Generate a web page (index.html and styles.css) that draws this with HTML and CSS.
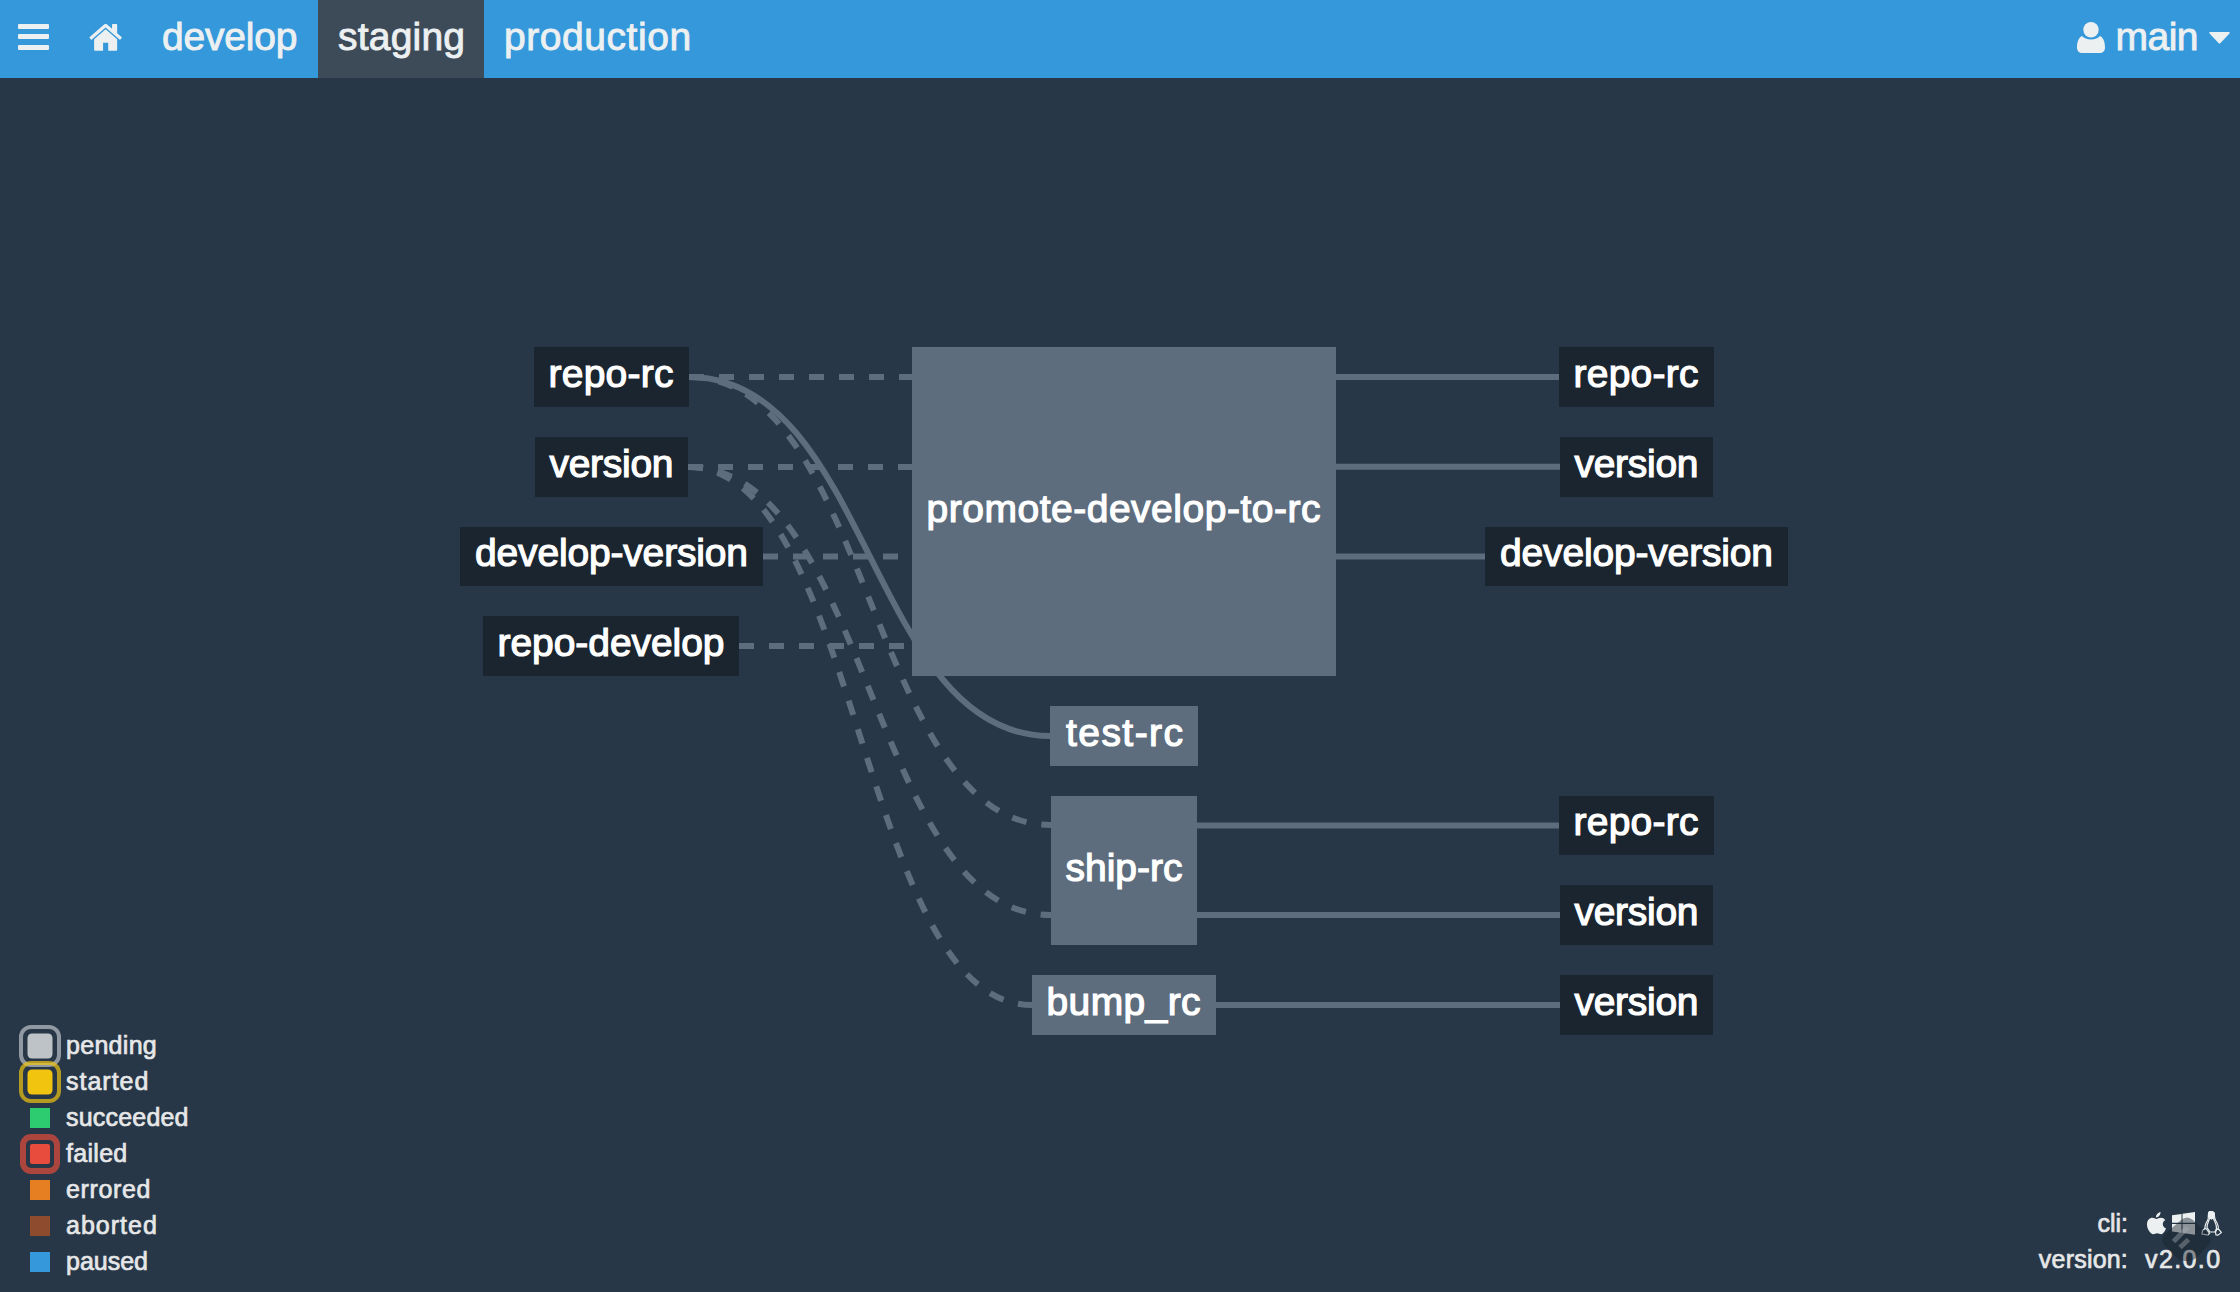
FILE: index.html
```html
<!DOCTYPE html>
<html lang="en">
<head>
<meta charset="utf-8">
<title>staging</title>
<link rel="stylesheet" href="styles.css">
</head>
<body>
<header class="topbar">
  <nav class="nav">
    <a class="icon-link menu"><svg width="32" height="28" viewBox="0 0 32 28"><path d="M1 0H30a1 1 0 0 1 1 1V4a1 1 0 0 1-1 1H1a1 1 0 0 1-1-1V1a1 1 0 0 1 1-1zM1 10H30a1 1 0 0 1 1 1V14a1 1 0 0 1-1 1H1a1 1 0 0 1-1-1V11a1 1 0 0 1 1-1zM1 21H30a1 1 0 0 1 1 1V25a1 1 0 0 1-1 1H1a1 1 0 0 1-1-1V22a1 1 0 0 1 1-1z"/></svg></a>
    <a class="icon-link home"><svg width="33" height="27" viewBox="0 0 1650 1290" preserveAspectRatio="none"><path d="M1408 736v480q0 26-19 45t-45 19H960V896H704v384H320q-26 0-45-19t-19-45V736q0-1 .5-3t.5-3l575-474 575 474q1 2 1 6zm223-69-62 74q-8 9-21 11h-3q-13 0-21-7L832 168 140 745q-12 8-24 7-13-2-21-11l-62-74q-8-10-7-23.500T37 622L756 23q32-26 76-26t76 26l244 204V32q0-14 9-23t23-9h192q14 0 23 9t9 23v408l219 182q10 8 11 21.500T1631 667z"/></svg></a>
    <a class="tab develop">develop</a>
    <a class="tab staging active">staging</a>
    <a class="tab production">production</a>
  </nav>
  <div class="user">
    <svg width="29" height="32" viewBox="0 0 29 32"><path d="M5 14C1.500 16 0 20 0 25.500 0 29 2 31 5.500 31h17c3.500 0 5.500-2 5.500-5.500C28 20 26.500 16 23 14c-2 2-5 3.500-9 3.500S7 16 5 14z"/><circle cx="14" cy="7.700" r="7.700"/></svg>
    <span>main</span>
    <svg class="caret" width="21" height="12" viewBox="0 0 21 12"><path d="M1 0H20Q21.500.5 20 2L11.500 11Q10.500 12 9.500 11L1 2Q-.5.5 1 0z"/></svg>
  </div>
</header>
<main class="pipeline">
  <svg class="graph" width="2240" height="1214" viewBox="0 78 2240 1214">
    <g class="edges">
      <path class="dashed" d="M689 377H912"/>
      <path class="dashed" d="M689 377C870 377 870 825 1051 825"/>
      <path d="M689 377C870 377 870 736 1050 736"/>
      <path class="dashed" d="M688 467H912"/>
      <path class="dashed" d="M688 467C870 467 870 915 1051 915"/>
      <path class="dashed" d="M688 467C860 467 860 1005 1032 1005"/>
      <path class="dashed" d="M763 556.500H912"/>
      <path class="dashed" d="M739 646H912"/>
      <path d="M1336 377H1559M1336 466.700H1560M1336 556.500H1485M1197 825.400H1559M1197 915H1560M1216 1005H1560"/>
    </g>
    <g class="resource">
      <rect x="534" y="347" width="155" height="60"/><text x="548.500" y="387" textLength="125">repo-rc</text>
      <rect x="535" y="437" width="153" height="60"/><text x="549.500" y="477" textLength="124">version</text>
      <rect x="460" y="527" width="303" height="59"/><text x="475" y="566" textLength="273">develop-version</text>
      <rect x="483" y="616" width="256" height="60"/><text x="497.500" y="656" textLength="227">repo-develop</text>
      <rect x="1559" y="347" width="155" height="60"/><text x="1573.500" y="387" textLength="125">repo-rc</text>
      <rect x="1560" y="437" width="153" height="60"/><text x="1574.500" y="477" textLength="124">version</text>
      <rect x="1485" y="527" width="303" height="59"/><text x="1500" y="566" textLength="273">develop-version</text>
      <rect x="1559" y="796" width="155" height="59"/><text x="1573.500" y="835" textLength="125">repo-rc</text>
      <rect x="1560" y="885" width="153" height="60"/><text x="1574.500" y="925" textLength="124">version</text>
      <rect x="1560" y="975" width="153" height="60"/><text x="1574.500" y="1015" textLength="124">version</text>
    </g>
    <g class="job">
      <rect x="912" y="347" width="424" height="329"/><text x="926.500" y="522" textLength="394">promote-develop-to-rc</text>
      <rect x="1050" y="706" width="148" height="60"/><text x="1066" y="746" textLength="117">test-rc</text>
      <rect x="1051" y="796" width="146" height="149"/><text x="1065.500" y="881" textLength="117">ship-rc</text>
      <rect x="1032" y="975" width="184" height="60"/><text x="1046.500" y="1015" textLength="154">bump_rc</text>
    </g>
  </svg>
  <ul class="legend">
    <li class="wide"><i class="swatch pending"></i>pending</li>
    <li class="widest"><i class="swatch started"></i>started</li>
    <li class="slight"><i class="swatch succeeded"></i>succeeded</li>
    <li class="wide"><i class="swatch failed"></i>failed</li>
    <li class="wider"><i class="swatch errored"></i>errored</li>
    <li class="widest"><i class="swatch aborted"></i>aborted</li>
    <li><i class="swatch paused"></i>paused</li>
  </ul>
  <dl class="info">
    <dt>cli:</dt>
    <dd class="os">
      <svg width="19" height="23" viewBox="0 0 19 23"><path d="M13.500 0C13.700 3 11.500 5.400 9 5.500 8.800 2.800 11 .4 13.500 0zM9.500 7C10.500 7 12 5.800 14 5.800c1.600 0 3.200.8 4.200 2.200-3.600 2-3 7 .8 8.300-1 3-3 5.900-4.900 5.900-1.400 0-2.200-.9-3.900-.9s-2.600.9-3.900.9C3.500 22.200 0 17 0 12.500 0 8 2.800 5.800 5.300 5.800 7 5.800 8.500 7 9.500 7z"/></svg>
      <svg width="23" height="23" viewBox="0 0 23 23"><path d="M0 3.200 9.500 1.900V10.700H0zM10.500 1.700 23 0V10.700H10.500zM0 12H9.500V20.800L0 19.500zM10.500 12H23V22.800L10.500 21z"/></svg>
      <svg class="tux" width="21" height="25" viewBox="0 0 21 25"><path d="M7.500 2.500C8 .2 13 .2 13.300 3c.3 3-.1 4.500 1.600 7 2 3 3 6 2 9M7.500 2.500C7 5 8 7 6.500 9.500 5 12 3.500 15 4 18"/><path d="M8.500 7.500C7.500 11 5.800 13 6 16.500l3 4.500h5l1.500-3.500C16 13 13.500 11 12.500 7.500z"/><path class="fill" d="M7.800 1.200Q10.500-.5 13 1.700L13.300 6 10.500 8 7.500 6z"/><path d="M4 17.500 1.500 19.500 1 23l6 1.200 1.500-2L5.500 18zM16 18l-1.500 3 .5 3 2 .2 3.500-2.700L18 18.500z"/></svg>
    </dd>
    <dt class="slight">version:</dt>
    <dd class="number">v2.0.0</dd>
  </dl>
  <svg class="badge" width="50" height="46" viewBox="0 0 50 46"><path class="plate" d="M19 3Q25-2 31 3L46 17Q51 23 46 29L34 41Q31 44 27 44H22Q18 44 15 41L3 29Q-2 23 3 17z"/><path class="bars" d="M11.500 24.500 25.500 10.500M18 30.500 26.500 22.500"/></svg>
</main>
</body>
</html>
```
FILE: styles.css
```css
* { box-sizing: border-box; }
body {
  margin: 0;
  height: 1292px;
  display: flex;
  flex-direction: column;
  overflow: hidden;
  background: #273747;
  color: #ecf0f1;
  font-family: "Liberation Sans", Arial, sans-serif;
}
.topbar {
  height: 78px;
  flex: none;
  display: flex;
  justify-content: space-between;
  background: #3498db;
  font-size: 39px;
  line-height: 73px;
  -webkit-text-stroke: 0.9px #ecf0f1;
}
.topbar svg { fill: #ecf0f1; stroke: none; }
.nav { display: flex; }
.icon-link { padding-top: 24px; line-height: 0; }
.menu { width: 89px; padding-left: 18px; }
.home { width: 53px; }
.tab { height: 78px; padding-left: 20px; }
.develop { width: 176px; letter-spacing: -0.2px; }
.staging { width: 166px; letter-spacing: 0.2px; }
.production { letter-spacing: 0.55px; }
.active { background: #3d4b59; }
.user { display: flex; padding: 0 10px 0 0; }
.user span { letter-spacing: -0.5px; }
.user svg { margin: 22px 9px 0 0; }
.user .caret { margin: 32px 0 0 11px; }
.pipeline { position: relative; flex: 1; }
.graph { display: block; }
.edges path { fill: none; stroke: #5d6d7e; stroke-width: 6; }
.edges .dashed { stroke-dasharray: 15 15; }
.graph text { fill: #fff; font-size: 39px; stroke: #fff; stroke-width: 1.2px; }
.resource rect { fill: #1b252f; }
.job rect { fill: #5d6d7e; }
.legend {
  position: absolute;
  left: 30px;
  bottom: 13px;
  margin: 0;
  padding: 0;
  list-style: none;
  font-size: 25px;
  line-height: 36px;
  color: #e6e7e8;
  -webkit-text-stroke: 0.7px #e6e7e8;
}
.legend li { display: flex; align-items: center; gap: 16px; height: 36px; }
.slight { letter-spacing: 0.2px; }
.wide { letter-spacing: 0.3px; }
.wider { letter-spacing: 0.65px; }
.widest { letter-spacing: 1px; }
.swatch { position: relative; top: 1px; width: 20px; height: 20px; }
.swatch::after { content: ""; position: absolute; }
.pending { background: #bdc3c7; box-shadow: 0 0 0 2.5px #bdc3c7; border-radius: 2px; }
.started { background: #f1c40f; box-shadow: 0 0 0 2.5px #f1c40f; border-radius: 2px; }
.pending::after, .started::after {
  inset: -11px;
  border: 4px solid #bdc3c7;
  border-radius: 12px;
  opacity: 0.7;
}
.started::after { border-color: #f1c40f; }
.succeeded { background: #2ecc71; }
.failed { background: #e74c3c; border-radius: 2px; }
.failed::after { inset: -10px; border: 6px solid #e74c3c; border-radius: 11px; opacity: 0.7; }
.errored { background: #e67e22; }
.aborted { background: #8f4b2d; }
.paused { background: #3498db; }
.info {
  position: absolute;
  right: 18px;
  bottom: 15px;
  margin: 0;
  display: grid;
  grid-template-columns: auto 77px;
  column-gap: 17px;
  font-size: 25px;
  line-height: 36px;
  text-align: right;
  color: #e6e7e8;
  -webkit-text-stroke: 0.7px #e6e7e8;
}
.info dd { margin: 0; text-align: left; white-space: nowrap; }
.number { letter-spacing: 1.4px; }
.info .os { display: flex; align-items: center; gap: 6px; padding-left: 2px; }
.os svg { flex: none; fill: #ecf0f1; }
.os .tux path { fill: none; stroke: #ecf0f1; stroke-width: 1.2; }
.os .tux .fill { fill: #ecf0f1; }
.badge { position: absolute; left: 2162px; top: 1139px; }
.plate { fill: #18222c; fill-opacity: 0.45; }
.bars { fill: none; stroke: #a7b0b5; stroke-opacity: 0.4; stroke-width: 5; }
```
